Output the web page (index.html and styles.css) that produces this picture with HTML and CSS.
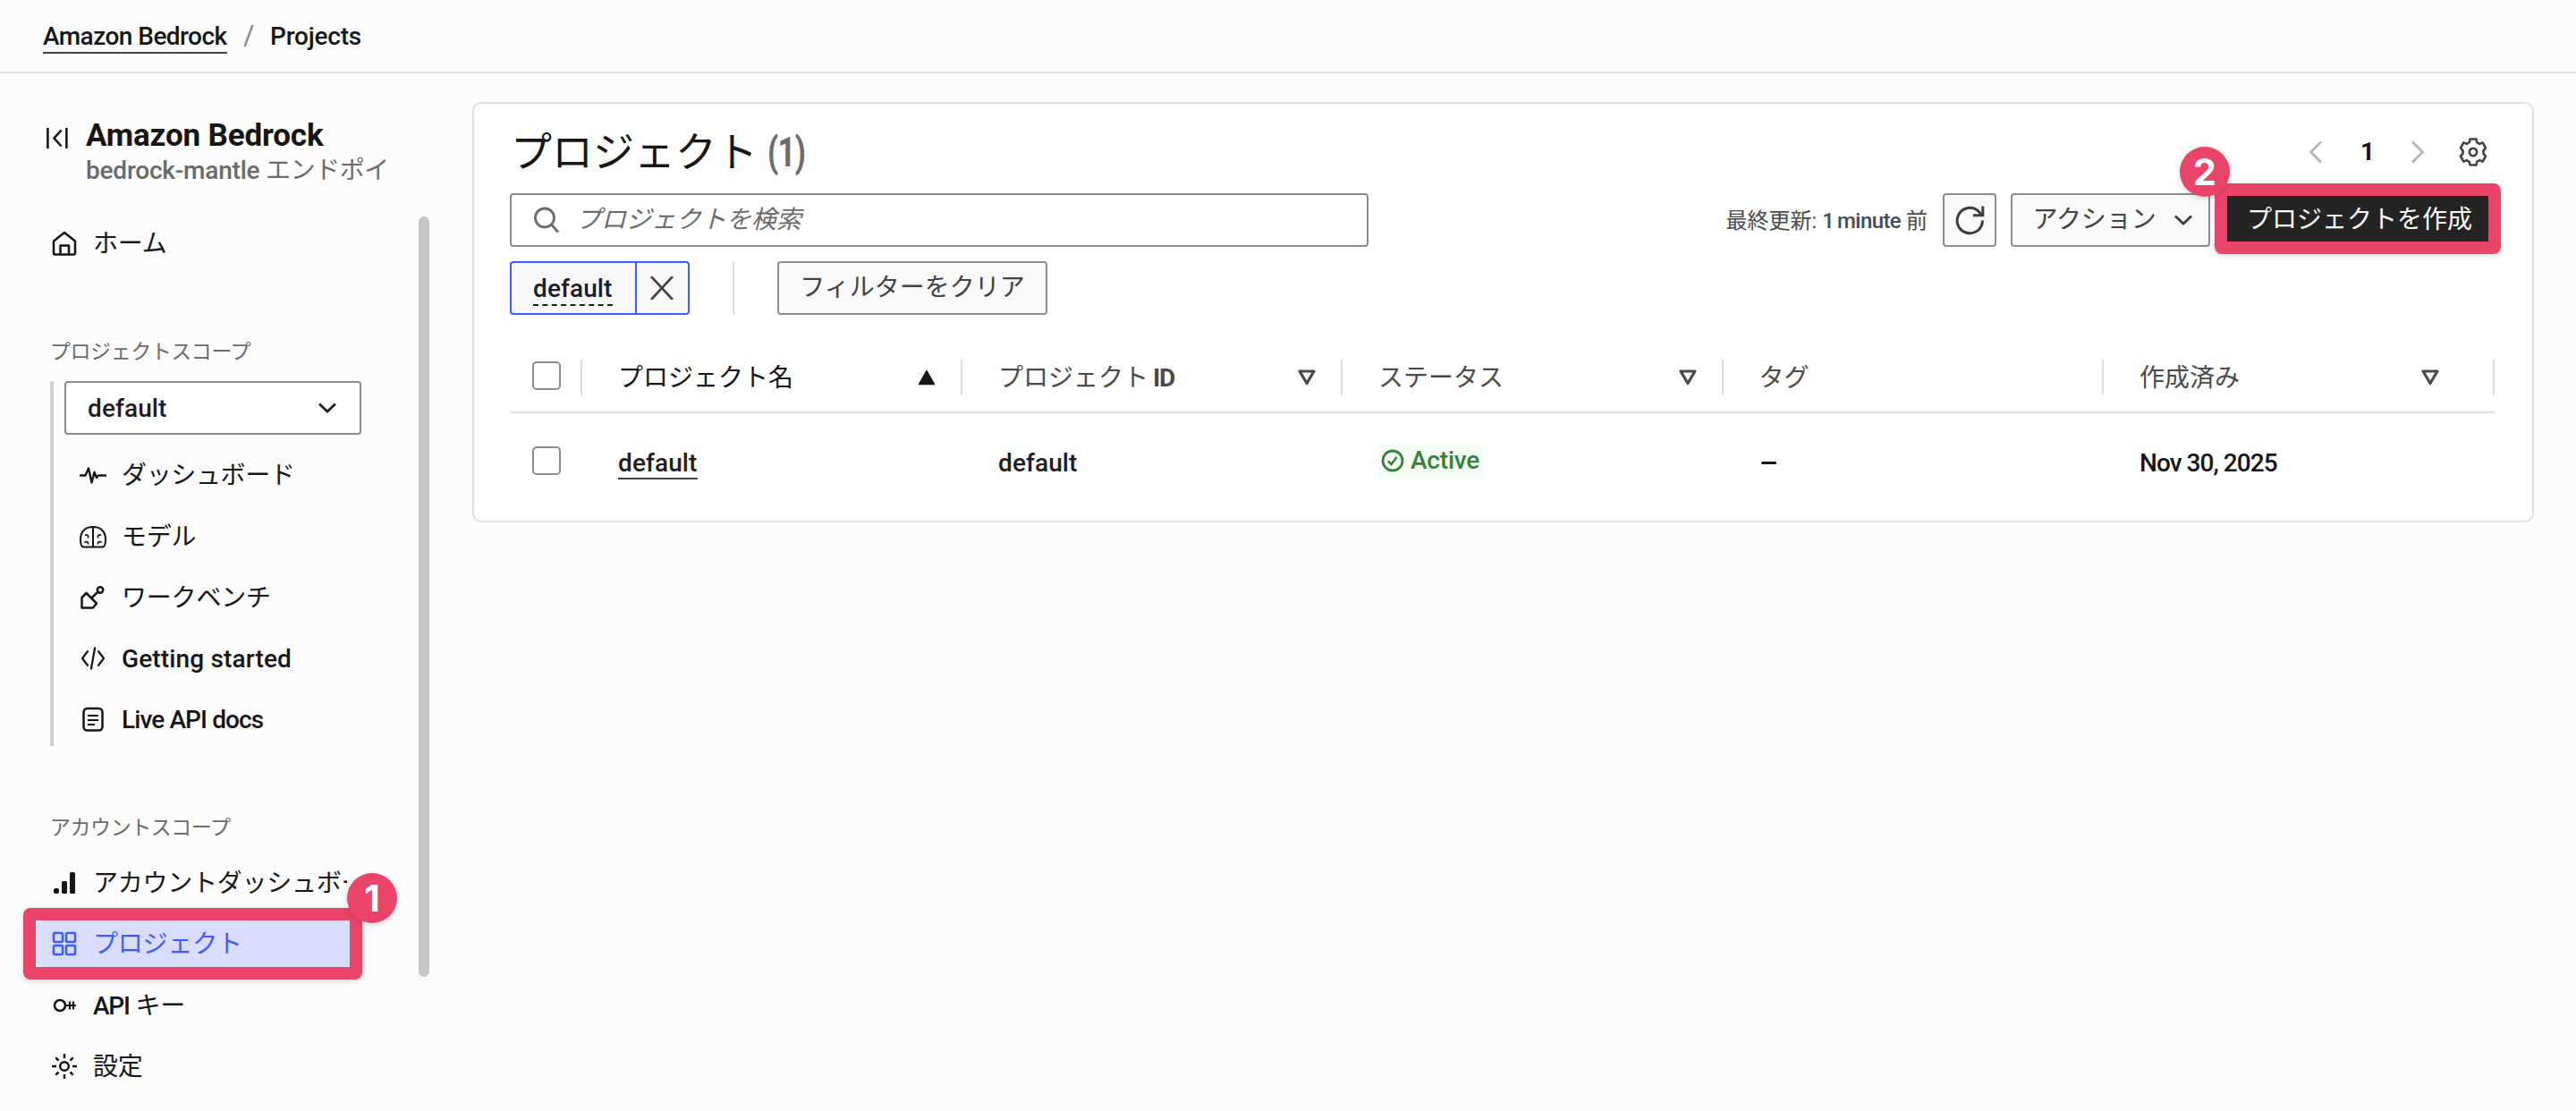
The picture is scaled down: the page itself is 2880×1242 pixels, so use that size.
FILE: index.html
```html
<!DOCTYPE html>
<html lang="ja">
<head>
<meta charset="utf-8">
<title>Projects - Amazon Bedrock</title>
<link rel="stylesheet" href="styles.css">
</head>
<body>
<header class="topbar">
  <a class="crumb crumb-link">Amazon Bedrock</a>
  <svg class="crumb-slash" width="12" height="26" viewBox="0 0 12 26"><path d="M10.5 1 1.5 25" stroke="#8c8c8c" stroke-width="2.4" fill="none"/></svg>
  <span class="crumb crumb-current">Projects</span>
</header>
<div class="layout">
  <aside class="sidebar">
    <div class="side-head">
      <svg class="collapse" width="26" height="26" viewBox="0 0 26 26" fill="none" stroke="#161616" stroke-width="2.6"><path d="M2.4 2v23M23.4 2v23M17.6 4.5 9.5 13.5l8.1 9"/></svg>
      <div class="side-titles">
        <h2 class="side-title">Amazon Bedrock</h2>
        <div class="side-sub"><span class="sub-latin">bedrock-mantle</span> エンドポイ</div>
      </div>
    </div>
    <div class="side-scroll">
      <nav class="nav">
        <a class="item">
          <svg class="ico" viewBox="0 0 32 32"><path d="M4 13.5 16 4l12 9.5V27a1.5 1.5 0 0 1-1.500 1.500h-21A1.500 1.500 0 0 1 4 27zM11.500 28V18.500h9.500V28"/></svg>
          <span class="label">ホーム</span>
        </a>
        <div class="section section-project">プロジェクトスコープ</div>
        <div class="group">
          <div class="select"><span class="t-default">default</span>
            <svg class="chev" width="20" height="12" viewBox="0 0 20 12"><path d="M1 1.500 10 10l9-8.500" fill="none" stroke="#222" stroke-width="2.800"/></svg>
          </div>
          <a class="item">
            <svg class="ico" viewBox="0 0 32 32"><path stroke-width="2.400" d="M1 16.500h6.500L11 8.500l3.500 16 3-11.500 2.500 6 2-2.500h9"/></svg>
            <span class="label l-dash">ダッシュボード</span>
          </a>
          <a class="item">
            <svg class="ico" viewBox="0 0 32 32"><path stroke-width="2" d="M16 5v22.500M16 5C8 5 2 9.500 2 19c0 6 .8 8.500 3.500 8.500h21C29.200 27.500 30 25 30 19 30 9.500 24 5 16 5z"/><path stroke-width="1.800" d="M7 14.500c2.500-1.500 4 0 3.500 3M6.500 22.500c2.500-2 4.500-.5 4 2M25 14.500c-2.500-1.500-4 0-3.500 3M25.500 22.500c-2.500-2-4.500-.5-4 2"/></svg>
            <span class="label">モデル</span>
          </a>
          <a class="item">
            <svg class="ico" viewBox="0 0 32 32"><path d="M3.500 27.500V16L8.500 11 20 22.500l-4 5zM14 17l8.500-8.500"/><circle cx="24" cy="7.500" r="3.200"/></svg>
            <span class="label l-work">ワークベンチ</span>
          </a>
          <a class="item">
            <svg class="ico" viewBox="0 0 32 32"><path stroke-width="2.200" d="M10.500 7.500 4 16l6.500 8.500M21.500 7.500 28 16l-6.500 8.500M18.200 3.500l-4.400 25"/></svg>
            <span class="label t-getting">Getting started</span>
          </a>
          <a class="item">
            <svg class="ico" viewBox="0 0 32 32"><rect x="5.500" y="4" width="21" height="24.500" rx="4"/><path stroke-width="2.200" d="M10 12h12M10 17h12M10 22h8"/></svg>
            <span class="label t-live">Live API docs</span>
          </a>
        </div>
        <div class="section section-account">アカウントスコープ</div>
        <div class="items">
          <a class="item">
            <svg class="ico solid" viewBox="0 0 32 32"><rect x="4" y="22" width="6" height="6" rx="2"/><rect x="13" y="14" width="6" height="14" rx="1.500"/><rect x="22" y="4" width="6" height="24" rx="1.500"/></svg>
            <span class="label l-acct">アカウントダッシュボード</span>
          </a>
          <a class="item selected">
            <svg class="ico" viewBox="0 0 32 32"><rect x="4" y="4" width="10" height="10" rx="1.500"/><rect x="18" y="4" width="10" height="10" rx="1.500"/><rect x="4" y="18" width="10" height="10" rx="1.500"/><rect x="18" y="18" width="10" height="10" rx="1.500"/></svg>
            <span class="label">プロジェクト</span>
          </a>
          <a class="item">
            <svg class="ico" viewBox="0 0 32 32"><circle cx="11" cy="16" r="6"/><path stroke-width="2.200" d="M17 16h12M22 11.500v9M26 11.500v9"/></svg>
            <span class="label"><span class="api">API</span> キー</span>
          </a>
          <a class="item">
            <svg class="ico" viewBox="0 0 32 32"><circle cx="16" cy="16" r="4.800"/><path d="M16 2v5M16 25v5M2 16h5M25 16h5M6.300 6.300l3.200 3.200M22.500 22.500l3.200 3.200M25.700 6.300l-3.200 3.200M9.500 22.500l-3.200 3.200"/></svg>
            <span class="label">設定</span>
          </a>
        </div>
      </nav>
      <div class="scrollbar"></div>
    </div>
  </aside>
  <main class="main">
    <section class="card">
      <div class="card-head">
        <h1 class="card-title">プロジェクト <span class="count">(1)</span></h1>
        <div class="pager">
          <svg width="16" height="26" viewBox="0 0 16 26"><path d="M14 1.500 2.500 13 14 24.500" fill="none" stroke="#b4b4b4" stroke-width="2.600"/></svg>
          <span class="page">1</span>
          <svg width="16" height="26" viewBox="0 0 16 26"><path d="M2 1.500 13.500 13 2 24.500" fill="none" stroke="#b4b4b4" stroke-width="2.600"/></svg>
          <svg class="gear" width="32" height="32" viewBox="-16 -16 32 32" fill="none" stroke="#424242" stroke-width="2.600" stroke-linejoin="round"><path d="M-4.300-10.800-3.400-14.500H3.400L4.300-10.800 7.200-9.120 10.610-10.630 14-4.600 11.500-1.680V1.680L14 4.600 10.610 10.630 7.200 9.120 4.300 10.800 3.400 14.500H-3.400L-4.300 10.800-7.200 9.120-10.610 10.630-14 4.600-11.500 1.680V-1.680L-14-4.600-10.610-10.630-7.200-9.120z"/><circle r="4.200"/></svg>
        </div>
      </div>
      <div class="tools">
        <div class="search">
          <svg width="28" height="30" viewBox="0 0 28 30" fill="none" stroke="#6b6b6b" stroke-width="2.800"><circle cx="12" cy="12.500" r="10.500"/><path d="m19.500 20 7.500 8.500"/></svg>
          <span class="placeholder">プロジェクトを検索</span>
        </div>
        <div class="actions">
          <span class="updated">最終更新: <span class="upd-latin">1 minute</span> 前</span>
          <button class="btn btn-icon"><svg width="34" height="34" viewBox="0 0 34 34" fill="none" stroke="#3d3d3d" stroke-width="3"><path d="M31.500 17.500a14.200 14.200 0 1 1-4-9.800l3 4"/><path d="M31.800 1.500v10.200H21"/></svg></button>
          <button class="btn btn-menu"><span>アクション</span><svg width="20" height="12" viewBox="0 0 20 12"><path d="M1 1.500 10 10l9-8.500" fill="none" stroke="#3d3d3d" stroke-width="2.800"/></svg></button>
          <button class="btn btn-primary">プロジェクトを作成</button>
        </div>
      </div>
      <div class="filters">
        <div class="token">
          <div class="token-text"><span class="t-default">default</span></div>
          <div class="token-x"><svg width="26" height="26" viewBox="0 0 26 26"><path d="m1 0 24 26M25 0 1 26" stroke="#424242" stroke-width="2.600"/></svg></div>
        </div>
        <div class="divider"></div>
        <button class="btn btn-clear">フィルターをクリア</button>
      </div>
      <div class="table">
        <div class="row head">
          <div class="cell sel"><span class="box"></span></div>
          <div class="cell sorted"><span>プロジェクト名</span><svg class="sort" width="20" height="18" viewBox="0 0 20 18"><path d="M10 1.500 18.500 16.500h-17z" fill="#161616" stroke="#161616" stroke-width="1.500" stroke-linejoin="round"/></svg></div>
          <div class="cell"><span>プロジェクト <b class="id">ID</b></span><svg class="sort" width="20" height="18" viewBox="0 0 20 18"><path d="M2 2h16l-8 13.500z" fill="none" stroke="#4a4a4a" stroke-width="3.200" stroke-linejoin="round"/></svg></div>
          <div class="cell"><span>ステータス</span><svg class="sort" width="20" height="18" viewBox="0 0 20 18"><path d="M2 2h16l-8 13.500z" fill="none" stroke="#4a4a4a" stroke-width="3.200" stroke-linejoin="round"/></svg></div>
          <div class="cell"><span>タグ</span></div>
          <div class="cell last"><span>作成済み</span><svg class="sort" width="20" height="18" viewBox="0 0 20 18"><path d="M2 2h16l-8 13.500z" fill="none" stroke="#4a4a4a" stroke-width="3.200" stroke-linejoin="round"/></svg></div>
        </div>
        <div class="row body">
          <div class="cell sel"><span class="box"></span></div>
          <div class="cell"><a class="t-default name-link">default</a></div>
          <div class="cell"><span class="t-default">default</span></div>
          <div class="cell"><span class="status"><svg width="26" height="26" viewBox="0 0 26 26" fill="none" stroke="#35823a" stroke-width="2.800"><circle cx="13" cy="13" r="11"/><path stroke-width="2.600" d="m8 13.500 3.500 3.500 6-8"/></svg><span class="t-active">Active</span></span></div>
          <div class="cell"><span class="dash">–</span></div>
          <div class="cell last"><span class="t-date">Nov 30, 2025</span></div>
        </div>
      </div>
    </section>
  </main>
</div>
<div class="mark mark-nav"></div><div class="badge badge-nav">1</div>
<div class="mark mark-create"></div><div class="badge badge-create">2</div>
</body>
</html>
```
FILE: styles.css
```css
* { box-sizing: border-box; }
body {
  margin: 0; width: 2880px; height: 1242px; overflow: hidden; position: relative;
  background: #fcfcfc; color: #161616;
  font-family: Roboto, "Noto Sans CJK JP", sans-serif; font-size: 28px; font-weight: 400; line-height: 40px;
}
h1, h2 { margin: 0; font-weight: 400; }
svg { display: block; flex: none; }

.topbar { height: 82px; border-bottom: 2px solid #e2e2e2; padding: 0 48px; display: flex; align-items: center; }
.crumb { font-weight: 500; white-space: nowrap; line-height: 34px; margin-top: 3px; }
.crumb-link { width: 206px; letter-spacing: -0.55px; border-bottom: 2px solid #444; }
.crumb-slash { margin: 0 18px; }
.crumb-current { letter-spacing: -0.2px; margin-top: 2px; }

.layout { display: flex; height: 1160px; }
.sidebar { width: 480px; display: flex; flex-direction: column; flex: none; }
.side-head { height: 160px; padding: 48px 0 0 51px; display: flex; gap: 19px; flex: none; }
.collapse { margin-top: 11px; }
.side-titles { white-space: nowrap; padding-top: 2px; }
.side-title { font-size: 35px; font-weight: 700; line-height: 40px; letter-spacing: -0.15px; }
.side-sub { color: #6b6b6b; line-height: 38px; letter-spacing: -0.4px; }
.sub-latin { font-weight: 500; letter-spacing: -0.2px; }
.side-scroll { display: flex; flex: 1; min-height: 0; }
.nav { flex: 1; padding: 4px 0 0 40px; min-width: 0; overflow: hidden; }
.scrollbar { width: 12px; height: 850px; border-radius: 6px; background: #c6c6c6; flex: none; }

.item { display: flex; align-items: center; gap: 16px; height: 52px; padding-left: 16px; width: 356px; border-radius: 8px; white-space: nowrap; font-weight: 500; }
.label { overflow: hidden; font-weight: 400; padding-top: 2px; letter-spacing: -0.2px; }
.ico { width: 32px; height: 32px; fill: none; stroke: #161616; stroke-width: 2.5; stroke-linejoin: round; }
.ico.solid { fill: #161616; stroke: none; }
.selected { background: #d9ddfb; color: #3d5cff; }
.selected .ico { stroke: #3d5cff; }
.section { font-size: 23px; line-height: 30px; color: #6b6b6b; padding-left: 16px; letter-spacing: -0.45px; }
.section-project { margin: 81px 0 17px; }
.section-account { margin: 77px 0 20px; }
.group { margin-left: 16px; border-left: 4px solid #d0d0d0; padding: 0 0 4px 12px; display: flex; flex-direction: column; gap: 16.250px; height: 408px; }
.items { display: flex; flex-direction: column; gap: 16.300px; }
.select { width: 332px; height: 60px; border: 2px solid #8c8c8c; border-radius: 4px; background: #fff; padding: 0 26px 0 24px; display: flex; align-items: center; justify-content: space-between; margin-bottom: 3px; flex: none; }
.select .t-default { padding-top: 2px; }
.group .item { width: 330px; flex: none; }
.t-default { font-weight: 500; letter-spacing: 0.1px; color: #1e1e1e; }
.label.t-getting { font-weight: 500; letter-spacing: 0.15px; }
.label.t-live { font-weight: 500; letter-spacing: -0.9px; }
.label.l-dash { letter-spacing: -0.35px; }
.label.l-acct { width: 284px; letter-spacing: -0.25px; }
.api { font-weight: 500; letter-spacing: -1.2px; }

.main { flex: 1; padding: 32px 49px 32px 48px; }
.card { height: 470px; border: 2px solid #e0e0e0; border-radius: 10px; background: #fefefe; padding: 24px 42px 0 40px; }
.card-head { display: flex; justify-content: space-between; height: 60px; align-items: center; }
.card-title { font-size: 46px; line-height: 60px; white-space: pre; padding-left: 1px; }
.count { display: inline-block; font-weight: 700; color: #6b6b6b; font-size: 46px; letter-spacing: -1px; line-height: 56px; transform: scaleX(.76); transform-origin: left; }
.pager { display: flex; align-items: center; padding-right: 8px; }
.page { font-weight: 700; width: 98px; text-align: center; padding-left: 2px; }
.gear { margin-left: 38px; }
.tools { display: flex; justify-content: space-between; margin-top: 16px; }
.search { width: 960px; height: 60px; border: 2px solid #8c8c8c; border-radius: 4px; display: flex; align-items: center; gap: 19px; padding-left: 25px; background: #fff; }
.placeholder { font-style: italic; color: #6b6b6b; }
.actions { display: flex; align-items: center; }
.updated { font-size: 24px; color: #4a4a4a; margin-right: 17px; white-space: nowrap; padding-top: 2px; }
.upd-latin { font-weight: 500; letter-spacing: -0.6px; word-spacing: -1.5px; }
.btn { height: 60px; font: inherit; color: #424242; background: #f9f9f9; border: 2px solid #8c8c8c; border-radius: 4px; padding: 0; display: flex; align-items: center; justify-content: center; white-space: nowrap; }
.btn-icon { width: 60px; margin-right: 16px; }
.btn-menu { width: 223px; margin-right: 16px; gap: 20px; padding-left: 4px; }
.btn-menu span { letter-spacing: -0.1px; }
.btn-primary { width: 302px; background: #242424; border-color: #242424; color: #fff; }
.filters { display: flex; margin-top: 16px; }
.token { display: flex; width: 201px; height: 60px; border: 2px solid #3d5cff; border-radius: 4px; background: #f8f8f8; }
.token-text { width: 140px; border-right: 2px solid #3d5cff; display: flex; align-items: center; padding-left: 24px; }
.token-text .t-default { border-bottom: 2px dashed #1e1e1e; line-height: 34px; margin-top: 4px; }
.token-x { flex: 1; display: flex; align-items: center; justify-content: center; padding-right: 1px; }
.divider { width: 2px; margin: 0 48px; background: #dedede; }
.btn-clear { width: 302px; }

.table { margin-top: 32px; width: 2219px; }
.row { display: grid; grid-template-columns: 81px 425px 425px 425.500px 425.500px 437px; }
.head { height: 78px; border-bottom: 2px solid #e0e0e0; padding: 18px 0; color: #4a4a4a; }
.cell { padding-left: 40px; display: flex; align-items: center; justify-content: space-between; white-space: nowrap; min-width: 0; }
.head .cell { height: 40px; border-right: 2px solid #dedede; padding-right: 28px; }
.head .cell > span:not(.box) { padding-top: 1px; }
.head .cell.last { padding-right: 60px; }
.head .sorted { color: #161616; }
.cell.sel { padding-left: 25px; }
.head .cell.sel { padding-right: 0; }
.box { width: 32px; height: 32px; border: 2px solid #8c8c8c; border-radius: 5px; background: #fff; }
.head .box { margin-top: -4px; }
.id { font-weight: 700; letter-spacing: -1.2px; margin-left: -2px; }
.body { height: 106px; align-content: start; padding-top: 33px; }
.body .cell { height: 40px; }
.body .sel .box { margin-top: 0; }
.name-link { border-bottom: 2px solid #444; line-height: 37px; height: 37px; margin-top: 5px; }
.body .t-date, .body .dash, .body span.t-default { margin-top: 6px; font-weight: 500; }
.body .t-date { letter-spacing: -0.95px; }
.body .dash { font-weight: 700; transform: scaleX(1.15); transform-origin: left; }
.status { display: flex; align-items: center; gap: 7px; height: 39px; width: 117px; padding-left: 3px; background: #f3fdf3; border-radius: 4px; color: #35823a; }
.t-active { font-weight: 500; letter-spacing: -0.2px; }

.mark { position: absolute; border: 14px solid #ea4469; border-radius: 8px; box-shadow: 0 2px 6px rgba(0,0,0,.14); }
.mark-nav { left: 26px; top: 1015px; width: 379px; height: 80px; }
.mark-create { left: 2476px; top: 205px; width: 320px; height: 79px; }
.badge { position: absolute; width: 56px; height: 56px; border-radius: 50%; background: #ea4469; color: #fff; font: 700 41px/56px Inter, sans-serif; text-align: center; box-shadow: 0 2px 6px rgba(0,0,0,.14); }
.badge-nav { left: 388px; top: 976px; }
.badge-create { left: 2437px; top: 164px; }
```
